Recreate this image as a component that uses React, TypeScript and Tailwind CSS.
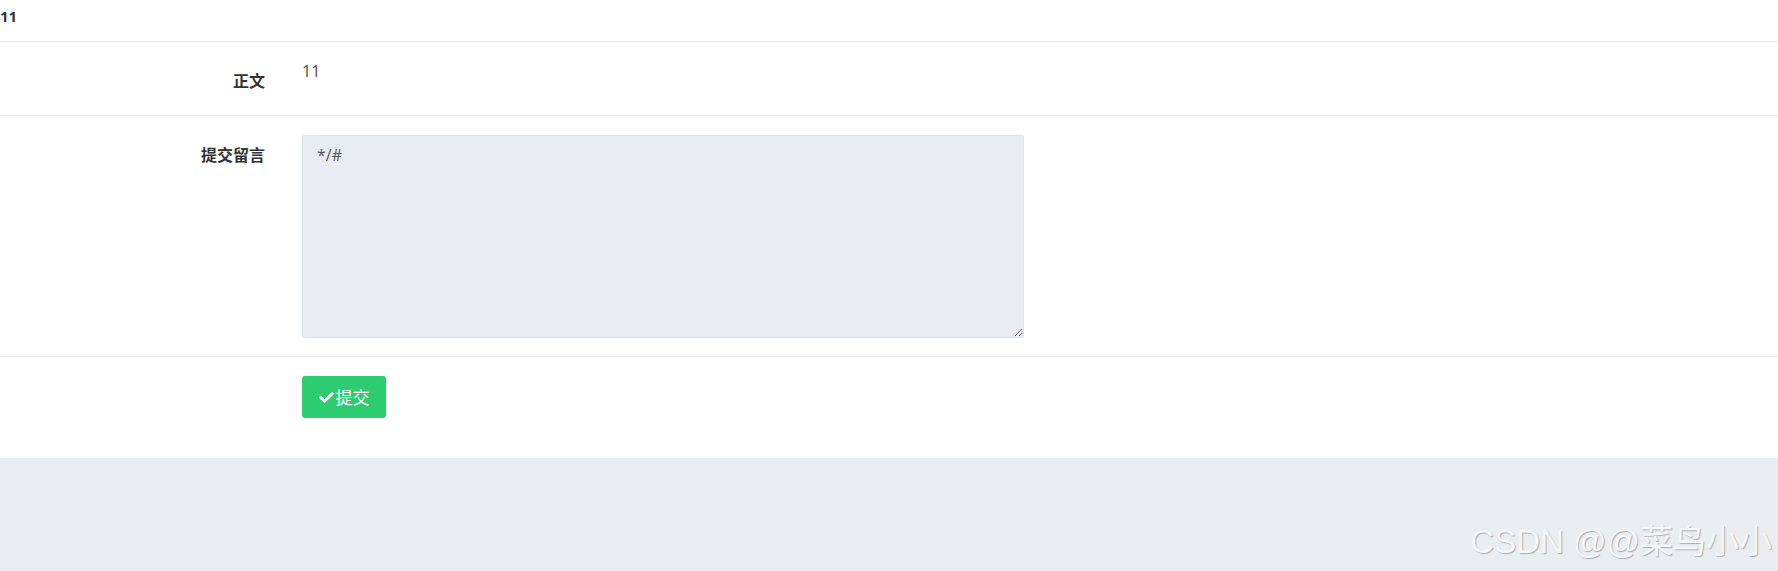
import { FaCheck } from 'react-icons/fa'

export default function App() {
  return (
    <div className="w-[1778px] h-[571px] bg-white flex flex-col font-['Open_Sans','Noto_Sans_CJK_SC',sans-serif] text-[#333]">
      <div className="h-[42px] border-b border-[#e7eaee] pt-[4px]">
        <span className="text-[15px] leading-[22px] font-bold">11</span>
      </div>

      <div className="h-[74px] border-b border-[#e7eaee] flex pt-[18px]">
        <div className="w-[265px] text-right mt-[9px] text-[16px] leading-[22px] font-semibold font-['Noto_Sans_CJK_SC',sans-serif]">
          正文
        </div>
        <div className="ml-[37px] text-[16px] leading-[22px] text-[#5e4636]">11</div>
      </div>

      <div className="h-[241px] border-b border-[#e7eaee] flex pt-[19px]">
        <div className="w-[265px] text-right mt-[8px] text-[16px] leading-[22px] font-semibold font-['Noto_Sans_CJK_SC',sans-serif]">
          提交留言
        </div>
        <textarea
          autoFocus
          defaultValue="*/#"
          className="ml-[37px] w-[722px] h-[203px] bg-[#e7ebf2] border border-[#dfe3ea] rounded-[2px] px-[14px] py-[8px] text-[16px] leading-[22px] text-[#555] outline-none"
        />
      </div>

      <div className="h-[101px] pt-[19px] pl-[302px]">
        <button
          type="button"
          className="w-[84px] h-[42px] bg-[#2ecc71] rounded-[3px] text-white text-[17px] flex items-center justify-center gap-[2px] font-['Noto_Sans_CJK_SC',sans-serif]"
        >
          <FaCheck className="w-[15px] h-[15px]" />
          提交
        </button>
      </div>

      <div className="flex-1 bg-[#e9edf0] flex items-end justify-end pr-[6px] pb-[10px]">
        <span className="text-[33px] leading-[38px] text-[#f4f6f8] font-['Liberation_Sans','Noto_Sans_CJK_SC',sans-serif] [text-shadow:1px_1px_1px_#a9adb2]">
          CSDN @@菜鸟小小
        </span>
      </div>
    </div>
  )
}
